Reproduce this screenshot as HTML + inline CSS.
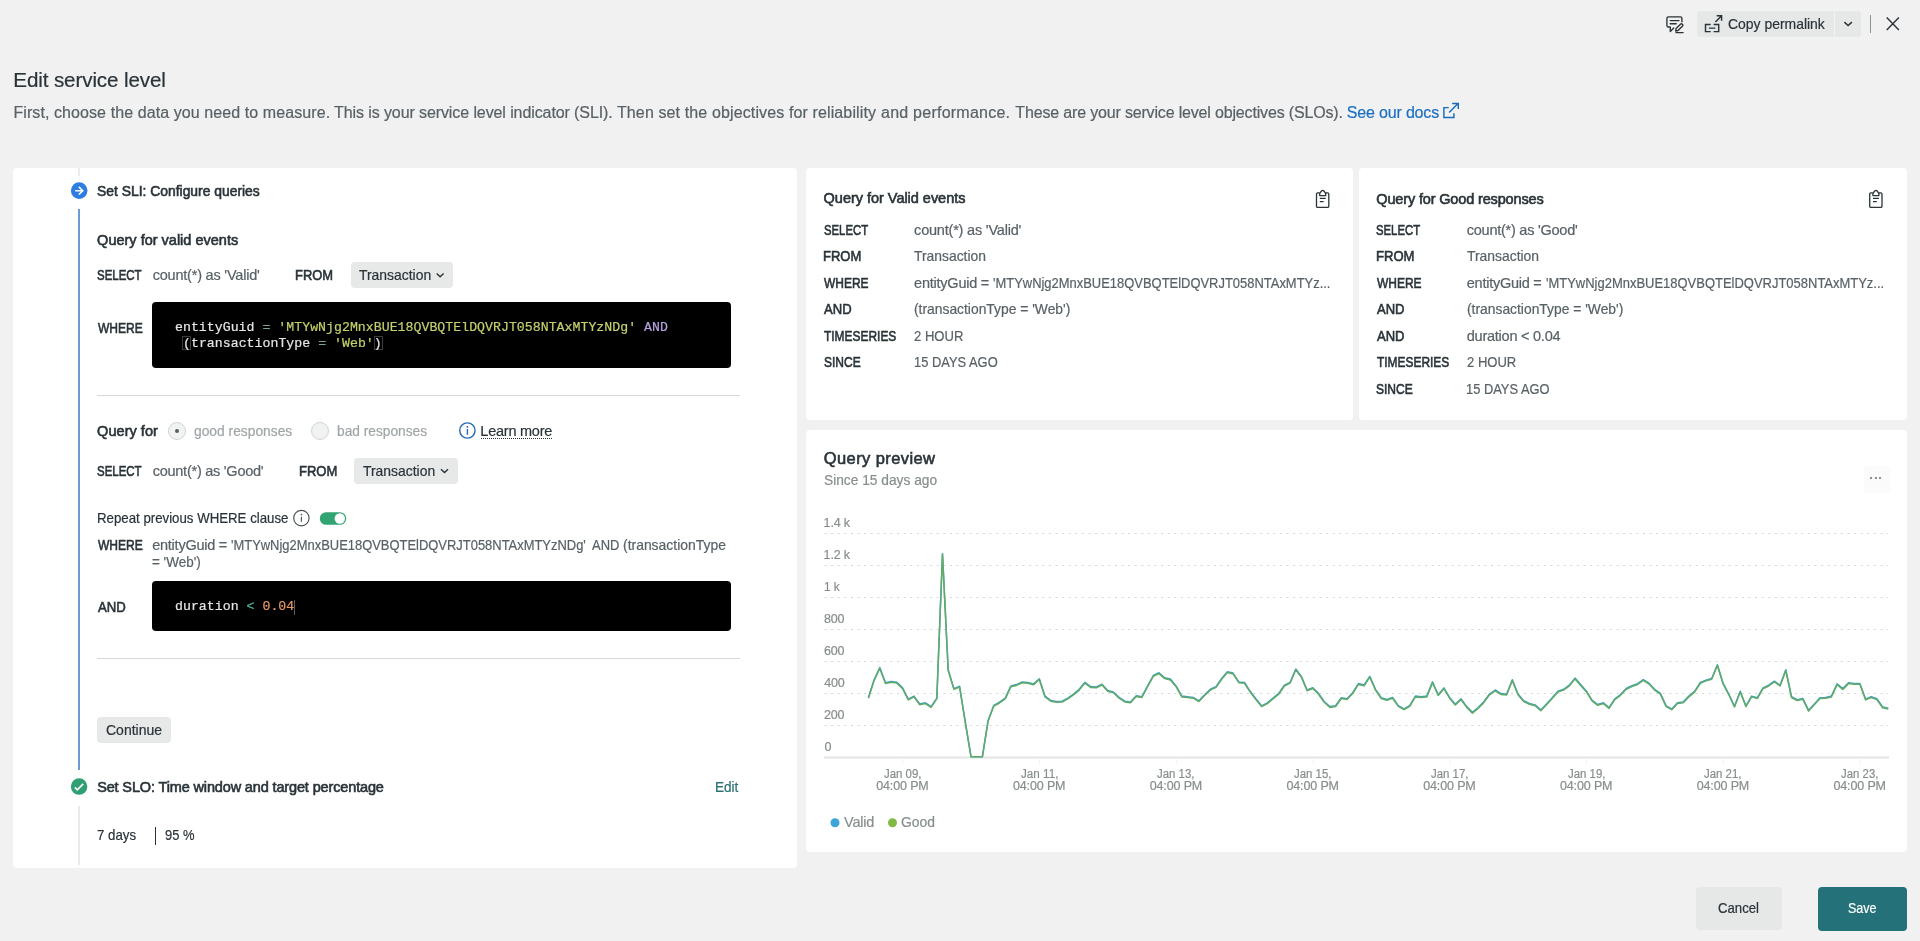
<!DOCTYPE html>
<html lang="en"><head><meta charset="utf-8"><title>Edit service level</title>
<style>
html,body{margin:0;padding:0}
body{width:1920px;height:941px;overflow:hidden;position:relative;background:#f1f1f1;font-family:"Liberation Sans",sans-serif;font-size:14.5px;color:#293338}
.t{-webkit-text-stroke:0.2px currentColor;position:absolute;white-space:pre;margin:0;padding:0;transform-origin:0 50%}
.m{font-family:"Liberation Mono",monospace}
.b{position:absolute;box-sizing:border-box}
.card{background:#fff;border-radius:4px}
.btn{background:#e7e8e8;border-radius:4px}
.code{background:#000;border-radius:4px}
svg{position:absolute;overflow:visible}
.t.sb{-webkit-text-stroke:0.6px currentColor}
#tx{position:absolute;left:0;top:0;width:1920px;height:941px;will-change:transform}

</style></head>
<body>
<div class="b btn" style="left:1696.7px;top:11.2px;width:164.3px;height:25.6px;background:#e6e7e7"></div>
<div class="b" style="left:1834.2px;top:11.2px;width:1px;height:25.6px;background:#f1f1f1"></div>
<div class="b" style="left:1870.1px;top:15.2px;width:1px;height:18px;background:#8e9396"></div>
<div class="b card" style="left:13px;top:168px;width:784.2px;height:700.4px"></div>
<div class="b card" style="left:806px;top:168px;width:546.7px;height:251.7px"></div>
<div class="b card" style="left:1359px;top:168px;width:547.6px;height:251.7px"></div>
<div class="b card" style="left:806px;top:430px;width:1100.6px;height:422px"></div>
<div class="b" style="left:78.2px;top:168px;width:2px;height:8px;background:#ececec"></div>
<div class="b" style="left:78.1px;top:209px;width:2.1px;height:560.5px;background:#6c9dd2"></div>
<div class="b" style="left:78.1px;top:806px;width:2.1px;height:59px;background:#e9eaea"></div>
<div class="b btn" style="left:350.75px;top:262px;width:102.3px;height:25.5px"></div>
<div class="b btn" style="left:354.25px;top:458.25px;width:103.3px;height:25.5px"></div>
<div class="b code" style="left:152.2px;top:302px;width:578.9px;height:66px"></div>
<div class="b code" style="left:152.2px;top:580.5px;width:579px;height:50.5px"></div>
<div class="b" style="left:182.1px;top:335.8px;width:8.9px;height:14.6px;border:1px solid #3c3c3c"></div>
<div class="b" style="left:373.5px;top:335.8px;width:9.1px;height:14.6px;border:1px solid #3c3c3c"></div>
<div class="b" style="left:294.4px;top:599.5px;width:1px;height:15px;background:#5c5c5c"></div>
<div class="b" style="left:97.2px;top:394.6px;width:642.8px;height:1px;background:#d5d7d8"></div>
<div class="b" style="left:97.2px;top:657.6px;width:642.8px;height:1px;background:#d5d7d8"></div>
<div class="b" style="left:168px;top:422.3px;width:18px;height:18px;border-radius:50%;background:#f1f2f2;border:1px solid #d2d5d5"></div>
<div class="b" style="left:174.9px;top:429.2px;width:4.2px;height:4.2px;border-radius:50%;background:#535e65"></div>
<div class="b" style="left:310.7px;top:422.3px;width:18px;height:18px;border-radius:50%;background:#f1f2f2;border:1px solid #d2d5d5"></div>
<div class="b" style="left:481px;top:437.6px;width:71px;height:0;border-top:1.2px dotted #293338"></div>
<div class="b btn" style="left:97.2px;top:717px;width:74.1px;height:25.5px"></div>
<div class="b" style="left:154.8px;top:827px;width:1px;height:17.5px;background:#293338"></div>
<div class="b" style="left:1864px;top:465.6px;width:25.5px;height:27px;border-radius:3px;background:#fbfbfb"></div>
<div class="b" style="left:1870.2px;top:476.7px;width:2px;height:2px;border-radius:50%;background:#666c70"></div>
<div class="b" style="left:1874.6px;top:476.7px;width:2px;height:2px;border-radius:50%;background:#666c70"></div>
<div class="b" style="left:1879.1px;top:476.7px;width:2px;height:2px;border-radius:50%;background:#666c70"></div>
<svg style="left:0;top:0" width="1920" height="941" viewBox="0 0 1920 941">
<line x1="824.5" y1="533.5" x2="1888" y2="533.5" stroke="#d3d5d6" stroke-width="1" stroke-dasharray="2 4.6"/>
<line x1="824.5" y1="565.5" x2="1888" y2="565.5" stroke="#d3d5d6" stroke-width="1" stroke-dasharray="2 4.6"/>
<line x1="824.5" y1="597.5" x2="1888" y2="597.5" stroke="#d3d5d6" stroke-width="1" stroke-dasharray="2 4.6"/>
<line x1="824.5" y1="629.5" x2="1888" y2="629.5" stroke="#d3d5d6" stroke-width="1" stroke-dasharray="2 4.6"/>
<line x1="824.5" y1="661.5" x2="1888" y2="661.5" stroke="#d3d5d6" stroke-width="1" stroke-dasharray="2 4.6"/>
<line x1="824.5" y1="693.5" x2="1888" y2="693.5" stroke="#d3d5d6" stroke-width="1" stroke-dasharray="2 4.6"/>
<line x1="824.5" y1="725.5" x2="1888" y2="725.5" stroke="#d3d5d6" stroke-width="1" stroke-dasharray="2 4.6"/>
<line x1="824" y1="757.6" x2="1889" y2="757.6" stroke="#e3e4e4" stroke-width="2"/>
<line x1="902.8" y1="758" x2="902.8" y2="764" stroke="#f1f2f2" stroke-width="1"/>
<line x1="1039.5" y1="758" x2="1039.5" y2="764" stroke="#f1f2f2" stroke-width="1"/>
<line x1="1176.3" y1="758" x2="1176.3" y2="764" stroke="#f1f2f2" stroke-width="1"/>
<line x1="1313.0" y1="758" x2="1313.0" y2="764" stroke="#f1f2f2" stroke-width="1"/>
<line x1="1449.8" y1="758" x2="1449.8" y2="764" stroke="#f1f2f2" stroke-width="1"/>
<line x1="1586.5" y1="758" x2="1586.5" y2="764" stroke="#f1f2f2" stroke-width="1"/>
<line x1="1723.3" y1="758" x2="1723.3" y2="764" stroke="#f1f2f2" stroke-width="1"/>
<line x1="1860.0" y1="758" x2="1860.0" y2="764" stroke="#f1f2f2" stroke-width="1"/>
<polyline points="868.4,697.4 874.1,679.8 879.8,667.6 885.5,682.8 891.2,681.4 896.9,682.3 902.6,687.9 908.3,699.1 914.0,696.1 919.7,703.9 925.4,702.8 931.1,706.6 936.8,698.1 942.5,553.8 948.2,669.7 953.9,688.6 959.6,686.3 965.3,721.8 971.0,756.7 976.7,756.7 982.4,756.7 988.1,720.4 993.8,705.3 999.5,702.2 1005.2,698.1 1010.9,685.9 1016.5,684.6 1022.2,681.9 1027.9,682.5 1033.6,683.9 1039.3,678.7 1045.0,696.1 1050.7,700.4 1056.4,701.5 1062.1,701.2 1067.8,698.1 1073.5,694.0 1079.2,689.3 1084.9,682.3 1090.6,686.6 1096.3,686.9 1102.0,684.2 1107.7,690.4 1113.4,692.0 1119.1,697.4 1124.8,701.2 1130.5,701.9 1136.2,695.8 1141.9,696.7 1147.6,685.9 1153.3,675.5 1159.0,672.8 1164.7,677.8 1170.4,679.1 1176.1,685.9 1181.8,696.1 1187.5,696.7 1193.2,697.4 1198.9,700.8 1204.6,694.7 1210.3,689.3 1216.0,686.6 1221.7,678.5 1227.4,671.7 1233.1,673.1 1238.8,681.9 1244.5,682.5 1250.2,691.3 1255.9,698.8 1261.6,705.8 1267.3,702.8 1273.0,698.1 1278.7,693.4 1284.4,685.2 1290.1,682.3 1295.8,669.0 1301.4,676.4 1307.1,690.0 1312.8,687.7 1318.5,693.4 1324.2,701.5 1329.9,706.6 1335.6,705.8 1341.3,697.7 1347.0,698.8 1352.7,692.7 1358.4,683.6 1364.1,685.0 1369.8,676.4 1375.5,689.3 1381.2,697.7 1386.9,699.5 1392.6,697.4 1398.3,705.6 1404.0,708.9 1409.7,705.6 1415.4,696.1 1421.1,696.7 1426.8,696.1 1432.5,681.9 1438.2,694.7 1443.9,687.9 1449.6,697.4 1455.3,704.2 1461.0,698.8 1466.7,706.6 1472.4,712.3 1478.1,707.6 1483.8,701.8 1489.5,694.0 1495.2,690.0 1500.9,693.6 1506.6,694.3 1512.3,679.8 1518.0,694.0 1523.7,700.8 1529.4,703.5 1535.1,704.9 1540.8,709.9 1546.5,703.9 1552.2,697.7 1557.9,691.3 1563.6,689.3 1569.3,685.2 1575.0,678.1 1580.7,684.6 1586.3,690.9 1592.0,700.1 1597.7,704.5 1603.4,702.8 1609.1,707.6 1614.8,698.8 1620.5,694.5 1626.2,688.5 1631.9,685.8 1637.6,683.7 1643.3,679.6 1649.0,683.2 1654.7,689.3 1660.4,693.4 1666.1,705.8 1671.8,708.9 1677.5,702.8 1683.2,701.9 1688.9,696.1 1694.6,691.3 1700.3,682.5 1706.0,680.1 1711.7,678.5 1717.4,664.7 1723.1,683.2 1728.8,694.0 1734.5,706.2 1740.2,691.3 1745.9,705.8 1751.6,696.1 1757.3,697.7 1763.0,687.9 1768.7,685.2 1774.4,681.2 1780.1,685.2 1785.8,669.7 1791.5,696.7 1797.2,699.7 1802.9,698.5 1808.6,710.3 1814.3,703.9 1820.0,697.7 1825.7,697.4 1831.4,696.1 1837.1,683.9 1842.8,688.6 1848.5,682.8 1854.2,683.5 1859.9,683.5 1865.6,699.1 1871.2,696.7 1876.9,698.8 1882.6,706.9 1888.3,708.3" fill="none" stroke="#3f9fc8" stroke-width="1.5" stroke-linejoin="round"/>
<polyline points="868.4,698.2 874.1,680.6 879.8,668.4 885.5,683.6 891.2,682.2 896.9,683.1 902.6,688.7 908.3,699.9 914.0,696.9 919.7,704.7 925.4,703.6 931.1,707.4 936.8,698.9 942.5,554.6 948.2,670.5 953.9,689.4 959.6,687.1 965.3,722.6 971.0,756.7 976.7,756.7 982.4,756.7 988.1,721.2 993.8,706.1 999.5,703.0 1005.2,698.9 1010.9,686.7 1016.5,685.4 1022.2,682.7 1027.9,683.3 1033.6,684.7 1039.3,679.5 1045.0,696.9 1050.7,701.2 1056.4,702.3 1062.1,702.0 1067.8,698.9 1073.5,694.8 1079.2,690.1 1084.9,683.1 1090.6,687.4 1096.3,687.7 1102.0,685.0 1107.7,691.2 1113.4,692.8 1119.1,698.2 1124.8,702.0 1130.5,702.7 1136.2,696.6 1141.9,697.5 1147.6,686.7 1153.3,676.3 1159.0,673.6 1164.7,678.6 1170.4,679.9 1176.1,686.7 1181.8,696.9 1187.5,697.5 1193.2,698.2 1198.9,701.6 1204.6,695.5 1210.3,690.1 1216.0,687.4 1221.7,679.3 1227.4,672.5 1233.1,673.9 1238.8,682.7 1244.5,683.3 1250.2,692.1 1255.9,699.6 1261.6,706.6 1267.3,703.6 1273.0,698.9 1278.7,694.2 1284.4,686.0 1290.1,683.1 1295.8,669.8 1301.4,677.2 1307.1,690.8 1312.8,688.5 1318.5,694.2 1324.2,702.3 1329.9,707.4 1335.6,706.6 1341.3,698.5 1347.0,699.6 1352.7,693.5 1358.4,684.4 1364.1,685.8 1369.8,677.2 1375.5,690.1 1381.2,698.5 1386.9,700.3 1392.6,698.2 1398.3,706.4 1404.0,709.7 1409.7,706.4 1415.4,696.9 1421.1,697.5 1426.8,696.9 1432.5,682.7 1438.2,695.5 1443.9,688.7 1449.6,698.2 1455.3,705.0 1461.0,699.6 1466.7,707.4 1472.4,713.1 1478.1,708.4 1483.8,702.6 1489.5,694.8 1495.2,690.8 1500.9,694.4 1506.6,695.1 1512.3,680.6 1518.0,694.8 1523.7,701.6 1529.4,704.3 1535.1,705.7 1540.8,710.7 1546.5,704.7 1552.2,698.5 1557.9,692.1 1563.6,690.1 1569.3,686.0 1575.0,678.9 1580.7,685.4 1586.3,691.7 1592.0,700.9 1597.7,705.3 1603.4,703.6 1609.1,708.4 1614.8,699.6 1620.5,695.3 1626.2,689.3 1631.9,686.6 1637.6,684.5 1643.3,680.4 1649.0,684.0 1654.7,690.1 1660.4,694.2 1666.1,706.6 1671.8,709.7 1677.5,703.6 1683.2,702.7 1688.9,696.9 1694.6,692.1 1700.3,683.3 1706.0,680.9 1711.7,679.3 1717.4,665.5 1723.1,684.0 1728.8,694.8 1734.5,707.0 1740.2,692.1 1745.9,706.6 1751.6,696.9 1757.3,698.5 1763.0,688.7 1768.7,686.0 1774.4,682.0 1780.1,686.0 1785.8,670.5 1791.5,697.5 1797.2,700.5 1802.9,699.3 1808.6,711.1 1814.3,704.7 1820.0,698.5 1825.7,698.2 1831.4,696.9 1837.1,684.7 1842.8,689.4 1848.5,683.6 1854.2,684.3 1859.9,684.3 1865.6,699.9 1871.2,697.5 1876.9,699.6 1882.6,707.7 1888.3,709.1" fill="none" stroke="#62ab66" stroke-width="1.5" stroke-linejoin="round"/>
<circle cx="835" cy="822.7" r="4.5" fill="#3ca4d6"/>
<circle cx="892.5" cy="822.7" r="4.5" fill="#82b845"/>
</svg>
<div class="b btn" style="left:1695.5px;top:887.2px;width:86.5px;height:42.9px;background:#e6e7e7"></div>
<div class="b" style="left:1818.1px;top:886.9px;width:88.8px;height:44px;border-radius:4px;background:#24717a"></div>
<svg style="left:0;top:0" width="1920" height="941" viewBox="0 0 1920 941"><g fill="none" stroke="#293338" stroke-width="1.35" stroke-linejoin="round" stroke-linecap="round"><path d="M1681.9 21.8V18.5a1.6 1.6 0 0 0-1.6-1.6H1668.5a1.6 1.6 0 0 0-1.6 1.6V25.4a1.6 1.6 0 0 0 1.6 1.6H1670.3V31.5L1673.8 28"/><path d="M1670.2 20.6H1679M1670.2 23.75H1676.2"/><path d="M1676.1 28.6L1680.7 24a0.9 0.9 0 0 1 1.3 0l0.6 0.6a0.9 0.9 0 0 1 0 1.3L1678 30.5l-2.3 0.5z"/><path d="M1676 32.6H1683.1"/></g><g fill="none" stroke="#293338" stroke-width="1.45"><path d="M1715.4 21.9L1721.4 15.9M1716.7 15.8H1721.6V20.8"/><path d="M1710.7 24.5H1705.5V31.6H1710.7M1713.6 24.5H1718.7V31.6H1713.6M1708.9 28.1H1715.4"/></g><path d="M1844.4 22.1L1848.1 25.5 1851.9 22.1" fill="none" stroke="#293338" stroke-width="1.5"/><path d="M1886.7 17.5L1898.9 29.9M1898.9 17.5L1886.7 29.9" fill="none" stroke="#293338" stroke-width="1.4"/><path d="M1448.8 107.6H1443.9V117.4H1453.9V113.3M1449.1 112.5L1458 103.6M1452.2 103.4H1458.3V109.1" fill="none" stroke="#1c6cbd" stroke-width="1.45"/><circle cx="79.2" cy="190.6" r="8.3" fill="#2e7de0"/><path d="M75.2 190.7H82.6M78.8 186.9L82.8 190.7 78.8 194.5" fill="none" stroke="#fff" stroke-width="1.55"/><circle cx="79.1" cy="786.6" r="8.25" fill="#2f9f74"/><path d="M74.9 787.4L77.3 789.8 83.2 783.8" fill="none" stroke="#fff" stroke-width="1.7"/><path d="M436.7 273.4L440.1 276.7 443.6 273.4" fill="none" stroke="#293338" stroke-width="1.4"/><path d="M441 469.3L444.5 472.6 448 469.3" fill="none" stroke="#293338" stroke-width="1.4"/><g fill="none" stroke="#2569b3" stroke-width="1.4"><circle cx="467.4" cy="430.5" r="7.65"/><path d="M467.4 429V434.8"/></g><circle cx="467.4" cy="426.9" r="0.95" fill="#2569b3"/><g fill="none" stroke="#4a5256" stroke-width="1.15"><circle cx="301.4" cy="518.1" r="7.7"/><path d="M301.4 516.8V521.8"/></g><circle cx="301.4" cy="514.5" r="0.85" fill="#4a5256"/><rect x="319.8" y="512.2" width="26.4" height="12.6" rx="6.3" fill="#31a472"/><circle cx="339.8" cy="518.5" r="5.2" fill="#fff"/><g transform="translate(0 0)" fill="none" stroke="#293338" stroke-width="1.3" stroke-linejoin="round"><path d="M1319.6 192.9H1317.7a1.2 1.2 0 0 0-1.2 1.2V206.2a1.2 1.2 0 0 0 1.2 1.2H1327.6a1.2 1.2 0 0 0 1.2-1.2V194.1a1.2 1.2 0 0 0-1.2-1.2H1325.7"/><path d="M1319.7 195.6V193.3L1321.5 191Q1322.7 189.7 1323.9 191L1325.7 193.3V195.6Z"/><path d="M1319.8 198.4H1325.7M1319.8 201.7H1323.6"/></g><g transform="translate(553.2 0)" fill="none" stroke="#293338" stroke-width="1.3" stroke-linejoin="round"><path d="M1319.6 192.9H1317.7a1.2 1.2 0 0 0-1.2 1.2V206.2a1.2 1.2 0 0 0 1.2 1.2H1327.6a1.2 1.2 0 0 0 1.2-1.2V194.1a1.2 1.2 0 0 0-1.2-1.2H1325.7"/><path d="M1319.7 195.6V193.3L1321.5 191Q1322.7 189.7 1323.9 191L1325.7 193.3V195.6Z"/><path d="M1319.8 198.4H1325.7M1319.8 201.7H1323.6"/></g></svg>
<div id="tx">
<div class="t" style="left:13.31px;top:66.46px;font-size:20.6px;line-height:27px;color:#293338;letter-spacing:-0.114px;">Edit service level</div>
<div class="t" style="left:13.39px;top:102.05px;font-size:16px;line-height:21px;color:#586166;letter-spacing:0.088px;">First, choose the data you need to measure.</div>
<div class="t" style="left:334.04px;top:102.05px;font-size:16px;line-height:21px;color:#586166;letter-spacing:-0.096px;">This is your service level indicator (SLI).</div>
<div class="t" style="left:616.94px;top:102.05px;font-size:16px;line-height:21px;color:#586166;letter-spacing:0.124px;">Then set the objectives for reliability</div>
<div class="t" style="left:881.02px;top:102.05px;font-size:16px;line-height:21px;color:#586166;letter-spacing:0.240px;">and performance.</div>
<div class="t" style="left:1015.34px;top:102.05px;font-size:16px;line-height:21px;color:#586166;letter-spacing:-0.167px;">These are your service level objectives (SLOs).</div>
<div class="t" style="left:1346.87px;top:102.05px;font-size:16px;line-height:21px;color:#1c70c4;letter-spacing:-0.181px;">See our docs</div>
<div class="t" style="left:1727.59px;top:14.77px;font-size:14.5px;line-height:19px;color:#293338;transform:scaleX(0.9609);">Copy permalink</div>
<div class="t sb" style="left:97.17px;top:181.82px;font-size:14.5px;line-height:19px;color:#293338;transform:scaleX(0.9571);">Set SLI: Configure queries</div>
<div class="t sb" style="left:97.11px;top:230.57px;font-size:14.5px;line-height:19px;color:#293338;letter-spacing:0.001px;">Query for valid events</div>
<div class="t sb" style="left:97.28px;top:266.07px;font-size:14.5px;line-height:19px;color:#293338;transform:scaleX(0.7903);">SELECT</div>
<div class="t" style="left:152.68px;top:266.07px;font-size:14.5px;line-height:19px;color:#586166;letter-spacing:-0.206px;">count(*) as 'Valid'</div>
<div class="t sb" style="left:295.24px;top:266.07px;font-size:14.5px;line-height:19px;color:#293338;transform:scaleX(0.8897);">FROM</div>
<div class="t" style="left:359.49px;top:266.07px;font-size:14.5px;line-height:19px;color:#293338;transform:scaleX(0.9588);">Transaction</div>
<div class="t sb" style="left:97.75px;top:319.07px;font-size:14.5px;line-height:19px;color:#293338;transform:scaleX(0.8296);">WHERE</div>
<div class="t sb" style="left:97.11px;top:421.82px;font-size:14.5px;line-height:19px;color:#293338;letter-spacing:0.038px;">Query for</div>
<div class="t" style="left:194.22px;top:421.82px;font-size:14.5px;line-height:19px;color:#9fa4a6;transform:scaleX(0.9520);">good responses</div>
<div class="t" style="left:336.92px;top:421.82px;font-size:14.5px;line-height:19px;color:#9fa4a6;transform:scaleX(0.9467);">bad responses</div>
<div class="t" style="left:480.36px;top:421.82px;font-size:14.5px;line-height:19px;color:#293338;letter-spacing:-0.247px;">Learn more</div>
<div class="t sb" style="left:97.28px;top:461.57px;font-size:14.5px;line-height:19px;color:#293338;transform:scaleX(0.7903);">SELECT</div>
<div class="t" style="left:152.68px;top:461.57px;font-size:14.5px;line-height:19px;color:#586166;letter-spacing:-0.248px;">count(*) as 'Good'</div>
<div class="t sb" style="left:298.73px;top:461.57px;font-size:14.5px;line-height:19px;color:#293338;transform:scaleX(0.8956);">FROM</div>
<div class="t" style="left:363.24px;top:461.57px;font-size:14.5px;line-height:19px;color:#293338;transform:scaleX(0.9588);">Transaction</div>
<div class="t" style="left:96.71px;top:509.07px;font-size:14.5px;line-height:19px;color:#293338;transform:scaleX(0.9136);">Repeat previous WHERE clause</div>
<div class="t sb" style="left:97.75px;top:535.57px;font-size:14.5px;line-height:19px;color:#293338;transform:scaleX(0.8296);">WHERE</div>
<div class="t" style="left:152.18px;top:535.57px;font-size:14.5px;line-height:19px;color:#586166;letter-spacing:-0.239px;">entityGuid =</div>
<div class="t" style="left:230.89px;top:535.57px;font-size:14.5px;line-height:19px;color:#586166;transform:scaleX(0.8923);">'MTYwNjg2MnxBUE18QVBQTElDQVRJT058NTAxMTYzNDg'</div>
<div class="t" style="left:591.52px;top:535.57px;font-size:14.5px;line-height:19px;color:#586166;transform:scaleX(0.8922);">AND</div>
<div class="t" style="left:622.69px;top:535.57px;font-size:14.5px;line-height:19px;color:#586166;transform:scaleX(0.9598);">(transactionType</div>
<div class="t" style="left:152.14px;top:553.07px;font-size:14.5px;line-height:19px;color:#586166;transform:scaleX(0.9291);">= 'Web')</div>
<div class="t sb" style="left:97.77px;top:597.57px;font-size:14.5px;line-height:19px;color:#293338;transform:scaleX(0.9085);">AND</div>
<div class="t" style="left:106.09px;top:720.57px;font-size:14.5px;line-height:19px;color:#293338;transform:scaleX(0.9644);">Continue</div>
<div class="t sb" style="left:97.14px;top:777.57px;font-size:14.5px;line-height:19px;color:#293338;letter-spacing:-0.141px;">Set SLO: Time window and target percentage</div>
<div class="t" style="left:715.19px;top:777.57px;font-size:14.5px;line-height:19px;color:#2a6e75;transform:scaleX(0.9358);">Edit</div>
<div class="t" style="left:97.12px;top:826.07px;font-size:14.5px;line-height:19px;color:#293338;transform:scaleX(0.9154);">7 days</div>
<div class="t" style="left:164.69px;top:826.07px;font-size:14.5px;line-height:19px;color:#293338;transform:scaleX(0.8937);">95 %</div>
<div class="t sb" style="left:823.61px;top:189.32px;font-size:14.5px;line-height:19px;color:#293338;letter-spacing:-0.026px;">Query for Valid events</div>
<div class="t sb" style="left:823.79px;top:220.57px;font-size:14.5px;line-height:19px;color:#293338;transform:scaleX(0.7815);">SELECT</div>
<div class="t sb" style="left:823.23px;top:247.07px;font-size:14.5px;line-height:19px;color:#293338;transform:scaleX(0.8956);">FROM</div>
<div class="t sb" style="left:824.25px;top:273.57px;font-size:14.5px;line-height:19px;color:#293338;transform:scaleX(0.8250);">WHERE</div>
<div class="t sb" style="left:824.27px;top:300.07px;font-size:14.5px;line-height:19px;color:#293338;transform:scaleX(0.9003);">AND</div>
<div class="t sb" style="left:824.03px;top:326.57px;font-size:14.5px;line-height:19px;color:#293338;transform:scaleX(0.8237);">TIMESERIES</div>
<div class="t sb" style="left:823.76px;top:353.07px;font-size:14.5px;line-height:19px;color:#293338;transform:scaleX(0.8264);">SINCE</div>
<div class="t" style="left:914.08px;top:220.57px;font-size:14.5px;line-height:19px;color:#586166;letter-spacing:-0.201px;">count(*) as 'Valid'</div>
<div class="t" style="left:914.39px;top:247.07px;font-size:14.5px;line-height:19px;color:#586166;transform:scaleX(0.9568);">Transaction</div>
<div class="t" style="left:914.08px;top:273.57px;font-size:14.5px;line-height:19px;color:#586166;letter-spacing:-0.230px;">entityGuid =</div>
<div class="t" style="left:993.04px;top:273.57px;font-size:14.5px;line-height:19px;color:#586166;transform:scaleX(0.8928);">'MTYwNjg2MnxBUE18QVBQTElDQVRJT058NTAxMTYz...</div>
<div class="t" style="left:913.84px;top:300.07px;font-size:14.5px;line-height:19px;color:#586166;transform:scaleX(0.9551);">(transactionType = 'Web')</div>
<div class="t" style="left:914.04px;top:326.57px;font-size:14.5px;line-height:19px;color:#586166;transform:scaleX(0.9015);">2 HOUR</div>
<div class="t" style="left:913.72px;top:353.07px;font-size:14.5px;line-height:19px;color:#586166;transform:scaleX(0.8901);">15 DAYS AGO</div>
<div class="t sb" style="left:1376.31px;top:189.57px;font-size:14.5px;line-height:19px;color:#293338;letter-spacing:-0.153px;">Query for Good responses</div>
<div class="t sb" style="left:1376.49px;top:220.57px;font-size:14.5px;line-height:19px;color:#293338;transform:scaleX(0.7815);">SELECT</div>
<div class="t sb" style="left:1375.93px;top:247.07px;font-size:14.5px;line-height:19px;color:#293338;transform:scaleX(0.8991);">FROM</div>
<div class="t sb" style="left:1376.95px;top:273.57px;font-size:14.5px;line-height:19px;color:#293338;transform:scaleX(0.8259);">WHERE</div>
<div class="t sb" style="left:1376.97px;top:300.07px;font-size:14.5px;line-height:19px;color:#293338;transform:scaleX(0.8987);">AND</div>
<div class="t sb" style="left:1376.97px;top:326.57px;font-size:14.5px;line-height:19px;color:#293338;transform:scaleX(0.8987);">AND</div>
<div class="t sb" style="left:1376.73px;top:353.07px;font-size:14.5px;line-height:19px;color:#293338;transform:scaleX(0.8231);">TIMESERIES</div>
<div class="t sb" style="left:1376.45px;top:379.57px;font-size:14.5px;line-height:19px;color:#293338;transform:scaleX(0.8298);">SINCE</div>
<div class="t" style="left:1466.78px;top:220.57px;font-size:14.5px;line-height:19px;color:#586166;letter-spacing:-0.245px;">count(*) as 'Good'</div>
<div class="t" style="left:1467.09px;top:247.07px;font-size:14.5px;line-height:19px;color:#586166;transform:scaleX(0.9581);">Transaction</div>
<div class="t" style="left:1466.78px;top:273.57px;font-size:14.5px;line-height:19px;color:#586166;letter-spacing:-0.247px;">entityGuid =</div>
<div class="t" style="left:1545.64px;top:273.57px;font-size:14.5px;line-height:19px;color:#586166;transform:scaleX(0.8947);">'MTYwNjg2MnxBUE18QVBQTElDQVRJT058NTAxMTYz...</div>
<div class="t" style="left:1466.54px;top:300.07px;font-size:14.5px;line-height:19px;color:#586166;transform:scaleX(0.9551);">(transactionType = 'Web')</div>
<div class="t" style="left:1466.79px;top:326.57px;font-size:14.5px;line-height:19px;color:#586166;letter-spacing:-0.242px;">duration &lt; 0.04</div>
<div class="t" style="left:1466.74px;top:353.07px;font-size:14.5px;line-height:19px;color:#586166;transform:scaleX(0.8997);">2 HOUR</div>
<div class="t" style="left:1466.42px;top:379.57px;font-size:14.5px;line-height:19px;color:#586166;transform:scaleX(0.8890);">15 DAYS AGO</div>
<div class="t sb" style="left:823.77px;top:448.13px;font-size:16.5px;line-height:21px;color:#293338;letter-spacing:0.401px;">Query preview</div>
<div class="t" style="left:823.93px;top:470.57px;font-size:14.5px;line-height:19px;color:#878d8d;transform:scaleX(0.9481);">Since 15 days ago</div>
<div class="t" style="left:823.60px;top:515.27px;font-size:12.5px;line-height:16px;color:#878d8d;letter-spacing:-0.165px;">1.4 k</div>
<div class="t" style="left:823.60px;top:547.27px;font-size:12.5px;line-height:16px;color:#878d8d;letter-spacing:-0.165px;">1.2 k</div>
<div class="t" style="left:823.65px;top:579.27px;font-size:12.5px;line-height:16px;color:#878d8d;transform:scaleX(0.9458);">1 k</div>
<div class="t" style="left:824.01px;top:611.27px;font-size:12.5px;line-height:16px;color:#878d8d;letter-spacing:-0.159px;">800</div>
<div class="t" style="left:823.92px;top:643.27px;font-size:12.5px;line-height:16px;color:#878d8d;letter-spacing:-0.129px;">600</div>
<div class="t" style="left:824.26px;top:675.27px;font-size:12.5px;line-height:16px;color:#878d8d;letter-spacing:-0.245px;">400</div>
<div class="t" style="left:823.92px;top:707.27px;font-size:12.5px;line-height:16px;color:#878d8d;letter-spacing:-0.131px;">200</div>
<div class="t" style="left:824.55px;top:739.27px;font-size:12.5px;line-height:16px;color:#878d8d;">0</div>
<div class="t" style="left:883.92px;top:766.27px;font-size:12.5px;line-height:16px;color:#878d8d;transform:scaleX(0.9123);">Jan 09,</div>
<div class="t" style="left:876.21px;top:777.97px;font-size:12.5px;line-height:16px;color:#878d8d;letter-spacing:-0.138px;">04:00 PM</div>
<div class="t" style="left:1020.67px;top:766.27px;font-size:12.5px;line-height:16px;color:#878d8d;transform:scaleX(0.9336);">Jan 11,</div>
<div class="t" style="left:1012.96px;top:777.97px;font-size:12.5px;line-height:16px;color:#878d8d;letter-spacing:-0.138px;">04:00 PM</div>
<div class="t" style="left:1157.42px;top:766.27px;font-size:12.5px;line-height:16px;color:#878d8d;transform:scaleX(0.9123);">Jan 13,</div>
<div class="t" style="left:1149.71px;top:777.97px;font-size:12.5px;line-height:16px;color:#878d8d;letter-spacing:-0.138px;">04:00 PM</div>
<div class="t" style="left:1294.17px;top:766.27px;font-size:12.5px;line-height:16px;color:#878d8d;transform:scaleX(0.9123);">Jan 15,</div>
<div class="t" style="left:1286.46px;top:777.97px;font-size:12.5px;line-height:16px;color:#878d8d;letter-spacing:-0.138px;">04:00 PM</div>
<div class="t" style="left:1430.92px;top:766.27px;font-size:12.5px;line-height:16px;color:#878d8d;transform:scaleX(0.9123);">Jan 17,</div>
<div class="t" style="left:1423.21px;top:777.97px;font-size:12.5px;line-height:16px;color:#878d8d;letter-spacing:-0.138px;">04:00 PM</div>
<div class="t" style="left:1567.67px;top:766.27px;font-size:12.5px;line-height:16px;color:#878d8d;transform:scaleX(0.9123);">Jan 19,</div>
<div class="t" style="left:1559.96px;top:777.97px;font-size:12.5px;line-height:16px;color:#878d8d;letter-spacing:-0.138px;">04:00 PM</div>
<div class="t" style="left:1704.42px;top:766.27px;font-size:12.5px;line-height:16px;color:#878d8d;transform:scaleX(0.9123);">Jan 21,</div>
<div class="t" style="left:1696.71px;top:777.97px;font-size:12.5px;line-height:16px;color:#878d8d;letter-spacing:-0.138px;">04:00 PM</div>
<div class="t" style="left:1841.17px;top:766.27px;font-size:12.5px;line-height:16px;color:#878d8d;transform:scaleX(0.9123);">Jan 23,</div>
<div class="t" style="left:1833.46px;top:777.97px;font-size:12.5px;line-height:16px;color:#878d8d;letter-spacing:-0.138px;">04:00 PM</div>
<div class="t" style="left:844.04px;top:812.77px;font-size:14.5px;line-height:19px;color:#878d8d;letter-spacing:-0.235px;">Valid</div>
<div class="t" style="left:900.90px;top:812.77px;font-size:14.5px;line-height:19px;color:#878d8d;transform:scaleX(0.9571);">Good</div>
<div class="t" style="left:1718.13px;top:899.17px;font-size:14.5px;line-height:19px;color:#293338;transform:scaleX(0.9095);">Cancel</div>
<div class="t" style="left:1848.13px;top:899.17px;font-size:14.5px;line-height:19px;color:#fff;transform:scaleX(0.8621);">Save</div>
<div class="t m" style="left:175.00px;top:319.39px;font-size:13.2px;line-height:17px;color:#e6e6e6;letter-spacing:0.035px;">entityGuid </div>
<div class="t m" style="left:262.45px;top:319.39px;font-size:13.2px;line-height:17px;color:#7ea39e;letter-spacing:0.036px;">= </div>
<div class="t m" style="left:278.35px;top:319.39px;font-size:13.2px;line-height:17px;color:#c5d06c;letter-spacing:0.036px;">'MTYwNjg2MnxBUE18QVBQTElDQVRJT058NTAxMTYzNDg'</div>
<div class="t m" style="left:636.10px;top:319.39px;font-size:13.2px;line-height:17px;color:#e6e6e6;letter-spacing:0.028px;"> </div>
<div class="t m" style="left:644.05px;top:319.39px;font-size:13.2px;line-height:17px;color:#b7a1e0;letter-spacing:0.033px;">AND</div>
<div class="t m" style="left:183.00px;top:334.89px;font-size:13.2px;line-height:17px;color:#e6e6e6;letter-spacing:0.035px;">(transactionType </div>
<div class="t m" style="left:318.15px;top:334.89px;font-size:13.2px;line-height:17px;color:#7ea39e;letter-spacing:0.036px;">= </div>
<div class="t m" style="left:334.05px;top:334.89px;font-size:13.2px;line-height:17px;color:#c5d06c;letter-spacing:0.034px;">'Web'</div>
<div class="t m" style="left:373.80px;top:334.89px;font-size:13.2px;line-height:17px;color:#e6e6e6;letter-spacing:0.028px;">)</div>
<div class="t m" style="left:175.00px;top:597.89px;font-size:13.2px;line-height:17px;color:#e6e6e6;letter-spacing:0.035px;">duration </div>
<div class="t m" style="left:246.55px;top:597.89px;font-size:13.2px;line-height:17px;color:#56b7a5;letter-spacing:0.036px;">&lt; </div>
<div class="t m" style="left:262.45px;top:597.89px;font-size:13.2px;line-height:17px;color:#e89a6b;letter-spacing:0.036px;">0.04</div>
</div>
</body></html>
